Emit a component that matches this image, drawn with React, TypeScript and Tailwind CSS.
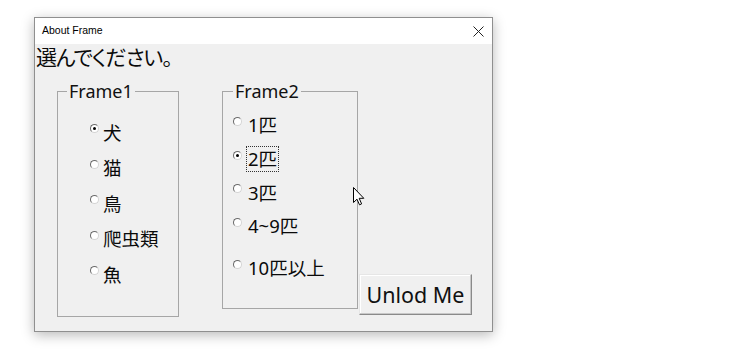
import React from "react";

const JP = "font-['Noto_Sans','Noto_Sans_CJK_JP',sans-serif]";

function Radio({ checked }: { checked?: boolean }) {
  return (
    <span className="w-[9px] h-[9px] shrink-0 rounded-full border border-t-[#6a6a6a] border-l-[#6a6a6a] border-r-[#d4d4d4] border-b-[#d4d4d4] bg-white flex items-center justify-center mb-[8px]">
      {checked && <span className="w-[3px] h-[3px] rounded-full bg-black" />}
    </span>
  );
}

function Row({ label, checked, focus, h, gap, extra }: { label: string; checked?: boolean; focus?: boolean; h: string; gap: string; extra?: string }) {
  return (
    <div className={`flex items-center ${h} ${extra ?? ""}`}>
      <Radio checked={checked} />
      <span
        className={`${gap} px-[1px] leading-[24px] border ${focus ? "border-dotted border-[#333]" : "border-transparent"} text-[18.5px] text-[#0a0a0a]`}
      >
        {label}
      </span>
    </div>
  );
}

export default function App() {
  return (
    <div className={`relative w-[750px] h-[350px] bg-white overflow-hidden ${JP}`}>
      <div className="ml-[34px] mt-[17px] w-[459px] h-[315px] border border-[#8f8f8f] flex flex-col shadow-[0_3px_12px_rgba(0,0,0,0.28)]">
        <div className="h-[26px] bg-white flex items-center justify-between pl-[7px] pr-[8px]">
          <span className="font-['Liberation_Sans',sans-serif] text-[10.5px] text-black">About Frame</span>
          <svg width="11" height="11" viewBox="0 0 11 11">
            <path d="M0.5 0.5 L10.5 10.5 M10.5 0.5 L0.5 10.5" stroke="#222" strokeWidth="1" />
          </svg>
        </div>
        <div className="flex-1 bg-[#f0f0f0] flex flex-col pl-[1px]">
          <div className="text-[21px] leading-[26px] tracking-[-1px] text-[#0a0a0a] [font-feature-settings:'palt']">選んでください。</div>
          <div className="flex items-start mt-[11px]">
            <fieldset className="ml-[21px] w-[122px] h-[236px] border border-[#a6a6a6]">
              <legend className="ml-[9px] px-[2px] text-[18px] leading-[20px] text-[#111]">Frame1</legend>
              <div className="flex flex-col pl-[32px] pt-[14px]">
                <Row label="犬" checked h="h-[35.5px]" gap="ml-[2px]" />
                <Row label="猫" h="h-[35.5px]" gap="ml-[2px]" />
                <Row label="鳥" h="h-[35.5px]" gap="ml-[2px]" />
                <Row label="爬虫類" h="h-[35.5px]" gap="ml-[2px]" />
                <Row label="魚" h="h-[35.5px]" gap="ml-[2px]" />
              </div>
            </fieldset>
            <fieldset className="ml-[43px] w-[136px] h-[228px] border border-[#a6a6a6]">
              <legend className="ml-[10px] px-[2px] text-[18px] leading-[20px] text-[#111]">Frame2</legend>
              <div className="flex flex-col pl-[10px] pt-[7px]">
                <Row label="1匹" h="h-[34px]" gap="ml-[4px]" />
                <Row label="2匹" checked focus h="h-[34px]" gap="ml-[4px]" />
                <Row label="3匹" h="h-[33px]" gap="ml-[4px]" />
                <Row label="4~9匹" h="h-[34px]" gap="ml-[4px]" />
                <Row label="10匹以上" h="h-[34px]" gap="ml-[4px]" extra="mt-[8px]" />
              </div>
            </fieldset>
            <button className="ml-[1px] mt-[193px] w-[113px] h-[41px] border border-t-[#e6e6e6] border-l-[#e6e6e6] border-r-[#8a8a8a] border-b-[#8a8a8a] bg-[#f0f0f0] shadow-[inset_-1px_-1px_0_#c8c8c8,inset_1px_1px_0_#ffffff] text-[21.5px] leading-[28px] text-[#111]">
              Unlod Me
            </button>
          </div>
        </div>
      </div>
      <svg className="absolute left-[353px] top-[187px]" width="12" height="19" viewBox="0 0 12 19">
        <path d="M0.5 0.5 L0.5 15.5 L4 12.2 L6.5 17.8 L8.6 16.9 L6.2 11.3 L10.8 11.3 Z" fill="white" stroke="black" strokeWidth="1" strokeLinejoin="round" />
      </svg>
    </div>
  );
}
